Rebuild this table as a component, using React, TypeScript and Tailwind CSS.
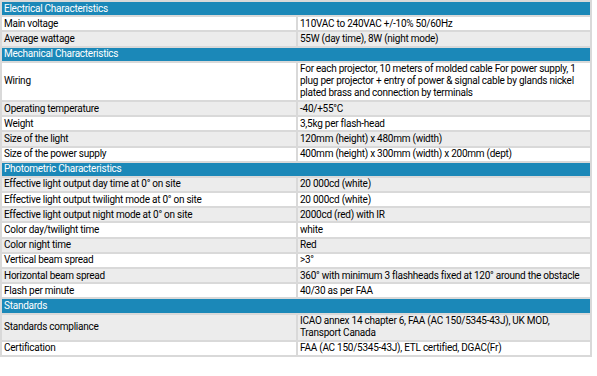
import React from "react";

type Row = { h?: string; l?: string; v?: string; g?: boolean };

const rows: Row[] = [
  { h: "Electrical Characteristics" },
  { l: "Main voltage", v: "110VAC to 240VAC +/-10% 50/60Hz" },
  { l: "Average wattage", v: "55W (day time), 8W (night mode)", g: true },
  { h: "Mechanical Characteristics" },
  {
    l: "Wiring",
    v: "For each projector, 10 meters of molded cable For power supply, 1 plug per projector + entry of power & signal cable by glands nickel plated brass and connection by terminals",
  },
  { l: "Operating temperature", v: "-40/+55°C", g: true },
  { l: "Weight", v: "3,5kg per flash-head" },
  { l: "Size of the light", v: "120mm (height) x 480mm (width)", g: true },
  { l: "Size of the power supply", v: "400mm (height) x 300mm (width) x 200mm (dept)" },
  { h: "Photometric Characteristics" },
  { l: "Effective light output day time at 0° on site", v: "20 000cd (white)", g: true },
  { l: "Effective light output twilight mode at 0° on site", v: "20 000cd (white)" },
  { l: "Effective light output night mode at 0° on site", v: "2000cd (red) with IR", g: true },
  { l: "Color day/twilight time", v: "white" },
  { l: "Color night time", v: "Red", g: true },
  { l: "Vertical beam spread", v: ">3°" },
  { l: "Horizontal beam spread", v: "360° with minimum 3 flashheads fixed at 120° around the obstacle", g: true },
  { l: "Flash per minute", v: "40/30 as per FAA" },
  { h: "Standards" },
  { l: "Standards compliance", v: "ICAO annex 14 chapter 6, FAA (AC 150/5345-43J), UK MOD, Transport Canada", g: true },
  { l: "Certification", v: "FAA (AC 150/5345-43J), ETL certified, DGAC(Fr)" },
];

export default function App() {
  return (
    <div className="w-[597px] h-[376px] bg-white" style={{ fontFamily: "Roboto, 'Liberation Sans', sans-serif" }}>
      <div className="w-[592px] bg-[#d9d9d9] p-[2px] grid grid-cols-[294px_292px] gap-[2px] text-[10px] leading-[12px] tracking-[-0.25px] text-black">
        {rows.map((r, i) =>
          r.h ? (
            <div key={i} className="col-span-2 bg-[#1b88b8] text-white px-[2px] py-[0.6px]">
              {r.h}
            </div>
          ) : (
            <React.Fragment key={i}>
              <div className={`${r.g ? "bg-[#ececec]" : "bg-white"} px-[2px] py-[0.6px] flex items-center`}>{r.l}</div>
              <div className={`${r.g ? "bg-[#ececec]" : "bg-white"} px-[2px] py-[0.6px] pr-[6px]`}>{r.v}</div>
            </React.Fragment>
          )
        )}
      </div>
    </div>
  );
}
